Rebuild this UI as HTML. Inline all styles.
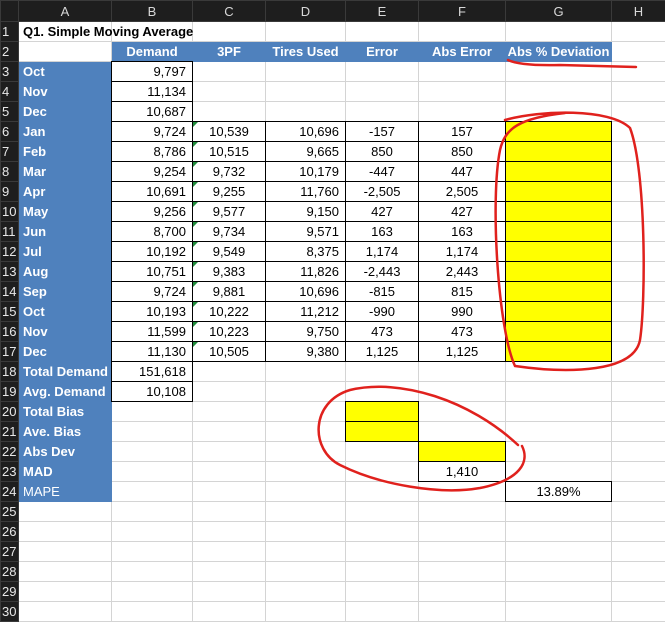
<!DOCTYPE html>
<html><head><meta charset="utf-8"><style>
body{margin:0;width:665px;height:621px;overflow:hidden;background:#fff;font-family:"Liberation Sans",sans-serif;font-size:13px;position:relative}
table{border-collapse:collapse;table-layout:fixed;position:absolute;left:0;top:0;width:665px}
td{height:19px;padding:0 4px;border:1px solid #d4d4d4;white-space:nowrap;overflow:hidden;line-height:19px;color:#000}
td.o{overflow:visible}
tr.h td{height:20px;background:#1e1e1e;color:#d8d8d8;text-align:center;border-color:#3a3a3a;font-size:13px}
td.n{background:#1e1e1e;color:#e8e8e8;border-color:#3a3a3a;padding:0 1px;text-align:left}
td.b{background:#4f81bd;color:#fff;font-weight:bold;border-color:#4f81bd}
td.bc{text-align:center;padding:0}
td.r{text-align:right;padding-right:6px}
td.c{text-align:center;padding:0}
td.m{font-weight:normal}
.bx{position:absolute;box-sizing:border-box;border:1px solid #000;background-image:repeating-linear-gradient(to bottom,transparent 0 19px,#000 19px 20px)}
.v{position:absolute;width:1px;background:#000}
.tri{position:absolute;width:0;height:0;border-top:5px solid #1f8b3a;border-right:5px solid transparent}
</style></head><body>
<table>
<colgroup><col style="width:18px"><col style="width:93px"><col style="width:81px"><col style="width:73px"><col style="width:80px"><col style="width:73px"><col style="width:87px"><col style="width:106px"><col style="width:54px"></colgroup>
<tr class="h"><td></td><td>A</td><td>B</td><td>C</td><td>D</td><td>E</td><td>F</td><td>G</td><td>H</td></tr>
<tr><td class="n">1</td><td class="o" style="font-weight:bold">Q1. Simple Moving Average</td><td></td><td></td><td></td><td></td><td></td><td></td><td></td></tr>
<tr><td class="n">2</td><td></td><td class="b bc">Demand</td><td class="b bc">3PF</td><td class="b bc">Tires Used</td><td class="b bc">Error</td><td class="b bc">Abs Error</td><td class="b bc">Abs % Deviation</td><td></td></tr>
<tr><td class="n">3</td><td class="b">Oct</td><td class="r">9,797</td><td></td><td></td><td></td><td></td><td></td><td></td></tr>
<tr><td class="n">4</td><td class="b">Nov</td><td class="r">11,134</td><td></td><td></td><td></td><td></td><td></td><td></td></tr>
<tr><td class="n">5</td><td class="b">Dec</td><td class="r">10,687</td><td></td><td></td><td></td><td></td><td></td><td></td></tr>
<tr><td class="n">6</td><td class="b">Jan</td><td class="r">9,724</td><td class="c">10,539</td><td class="r">10,696</td><td class="c">-157</td><td class="c">157</td><td></td><td></td></tr>
<tr><td class="n">7</td><td class="b">Feb</td><td class="r">8,786</td><td class="c">10,515</td><td class="r">9,665</td><td class="c">850</td><td class="c">850</td><td></td><td></td></tr>
<tr><td class="n">8</td><td class="b">Mar</td><td class="r">9,254</td><td class="c">9,732</td><td class="r">10,179</td><td class="c">-447</td><td class="c">447</td><td></td><td></td></tr>
<tr><td class="n">9</td><td class="b">Apr</td><td class="r">10,691</td><td class="c">9,255</td><td class="r">11,760</td><td class="c">-2,505</td><td class="c">2,505</td><td></td><td></td></tr>
<tr><td class="n">10</td><td class="b">May</td><td class="r">9,256</td><td class="c">9,577</td><td class="r">9,150</td><td class="c">427</td><td class="c">427</td><td></td><td></td></tr>
<tr><td class="n">11</td><td class="b">Jun</td><td class="r">8,700</td><td class="c">9,734</td><td class="r">9,571</td><td class="c">163</td><td class="c">163</td><td></td><td></td></tr>
<tr><td class="n">12</td><td class="b">Jul</td><td class="r">10,192</td><td class="c">9,549</td><td class="r">8,375</td><td class="c">1,174</td><td class="c">1,174</td><td></td><td></td></tr>
<tr><td class="n">13</td><td class="b">Aug</td><td class="r">10,751</td><td class="c">9,383</td><td class="r">11,826</td><td class="c">-2,443</td><td class="c">2,443</td><td></td><td></td></tr>
<tr><td class="n">14</td><td class="b">Sep</td><td class="r">9,724</td><td class="c">9,881</td><td class="r">10,696</td><td class="c">-815</td><td class="c">815</td><td></td><td></td></tr>
<tr><td class="n">15</td><td class="b">Oct</td><td class="r">10,193</td><td class="c">10,222</td><td class="r">11,212</td><td class="c">-990</td><td class="c">990</td><td></td><td></td></tr>
<tr><td class="n">16</td><td class="b">Nov</td><td class="r">11,599</td><td class="c">10,223</td><td class="r">9,750</td><td class="c">473</td><td class="c">473</td><td></td><td></td></tr>
<tr><td class="n">17</td><td class="b">Dec</td><td class="r">11,130</td><td class="c">10,505</td><td class="r">9,380</td><td class="c">1,125</td><td class="c">1,125</td><td></td><td></td></tr>
<tr><td class="n">18</td><td class="b">Total Demand</td><td class="r">151,618</td><td></td><td></td><td></td><td></td><td></td><td></td></tr>
<tr><td class="n">19</td><td class="b">Avg. Demand</td><td class="r">10,108</td><td></td><td></td><td></td><td></td><td></td><td></td></tr>
<tr><td class="n">20</td><td class="b">Total Bias</td><td></td><td></td><td></td><td></td><td></td><td></td><td></td></tr>
<tr><td class="n">21</td><td class="b">Ave. Bias</td><td></td><td></td><td></td><td></td><td></td><td></td><td></td></tr>
<tr><td class="n">22</td><td class="b">Abs Dev</td><td></td><td></td><td></td><td></td><td></td><td></td><td></td></tr>
<tr><td class="n">23</td><td class="b">MAD</td><td></td><td></td><td></td><td></td><td></td><td></td><td></td></tr>
<tr><td class="n">24</td><td class="b m">MAPE</td><td></td><td></td><td></td><td></td><td></td><td></td><td></td></tr>
<tr><td class="n">25</td><td></td><td></td><td></td><td></td><td></td><td></td><td></td><td></td></tr>
<tr><td class="n">26</td><td></td><td></td><td></td><td></td><td></td><td></td><td></td><td></td></tr>
<tr><td class="n">27</td><td></td><td></td><td></td><td></td><td></td><td></td><td></td><td></td></tr>
<tr><td class="n">28</td><td></td><td></td><td></td><td></td><td></td><td></td><td></td><td></td></tr>
<tr><td class="n">29</td><td></td><td></td><td></td><td></td><td></td><td></td><td></td><td></td></tr>
<tr><td class="n">30</td><td></td><td></td><td></td><td></td><td></td><td></td><td></td><td></td></tr>
</table>
<div class="bx" style="left:111px;top:61px;width:82px;height:341px"></div>
<div class="bx" style="left:192px;top:121px;width:314px;height:241px"></div>
<div class="v" style="left:265px;top:121px;height:240px"></div>
<div class="v" style="left:345px;top:121px;height:240px"></div>
<div class="v" style="left:418px;top:121px;height:240px"></div>
<div class="bx" style="left:505px;top:121px;width:107px;height:241px;background-color:#ffff00"></div>
<div class="bx" style="left:345px;top:401px;width:74px;height:41px;background-color:#ffff00"></div>
<div style="position:absolute;left:419px;top:442px;width:86px;height:19px;background:#ffff00"></div>
<div class="bx" style="left:418px;top:441px;width:88px;height:41px"></div>
<div class="bx" style="left:505px;top:481px;width:107px;height:21px;background-image:none"></div>
<div style="position:absolute;left:419px;top:462px;width:86px;height:19px;line-height:19px;text-align:center">1,410</div>
<div style="position:absolute;left:506px;top:482px;width:105px;height:19px;line-height:19px;text-align:center">13.89%</div>
<div class="tri" style="left:193px;top:122px"></div><div class="tri" style="left:193px;top:142px"></div><div class="tri" style="left:193px;top:162px"></div><div class="tri" style="left:193px;top:182px"></div><div class="tri" style="left:193px;top:202px"></div><div class="tri" style="left:193px;top:222px"></div><div class="tri" style="left:193px;top:242px"></div><div class="tri" style="left:193px;top:262px"></div><div class="tri" style="left:193px;top:282px"></div><div class="tri" style="left:193px;top:302px"></div><div class="tri" style="left:193px;top:322px"></div><div class="tri" style="left:193px;top:342px"></div>
<svg style="position:absolute;left:0;top:0" width="665" height="621" fill="none" stroke="#e0211d" stroke-width="2.5" stroke-linecap="round">
<path d="M508 60 Q520 66 560 65 L636 67"/>
<path d="M505 120 C540 110 610 108 630 128 C646 170 646 300 640 340 C634 372 570 374 515 366 C498 330 490 200 500 150 C505 128 520 118 565 113"/>
<path d="M518 445 C470 400 400 378 350 390 C310 402 310 450 340 465 C380 485 440 495 480 488 C520 480 530 462 522 446"/>
</svg>
</body></html>
